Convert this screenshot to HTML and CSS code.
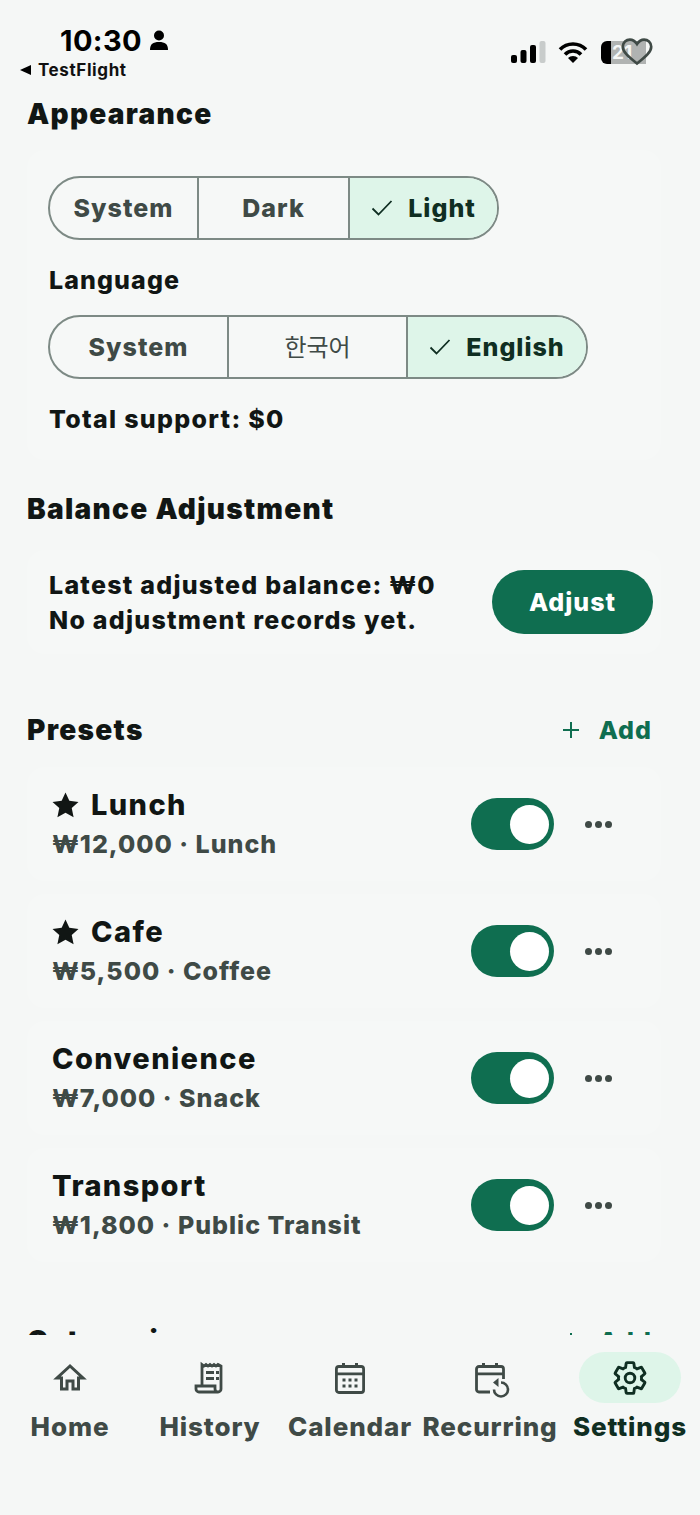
FILE: index.html
```html
<!DOCTYPE html>
<html lang="en">
<head>
    <meta charset="UTF-8">
    <meta name="viewport" content="width=device-width, initial-scale=1.0">
    <title>Settings</title>
    <link rel="stylesheet" href="styles.css">
</head>
<body>
    <div class="status">
        <div class="status-left">
            <div class="clock">10:30
                <svg class="person" viewBox="0 0 20 20"><circle cx="10" cy="5.500" r="5"/><path d="M1 20c0-6 3-8 9-8s9 2 9 8z"/></svg>
            </div>
            <div class="back"><span class="back-arrow"></span>TestFlight</div>
        </div>
        <div class="status-right">
            <svg class="signal" viewBox="0 0 35 22"><rect x="0" y="14" width="6" height="8" rx="2"/><rect x="9.500" y="9" width="6" height="13" rx="2"/><rect x="19" y="4" width="6" height="18" rx="2"/><rect x="28.500" y="0" width="6" height="22" rx="2" fill="#c8cccb"/></svg>
            <svg class="wifi" viewBox="0 0 30 22"><path d="M2 8.500a18 18 0 0 1 26 0M7 13.500a11 11 0 0 1 16 0" fill="none" stroke="#000" stroke-width="3.600"/><path d="M15 22l-5-5a7 7 0 0 1 10 0z"/></svg>
            <div class="battery">
                <div class="battery-fill"></div>
                <div class="battery-rest">21</div>
                <svg class="heart" viewBox="0 0 36 32"><path d="M18 29C8 21 2 16 2 10c0-5 4-8 8-8 3 0 6 2 8 5 2-3 5-5 8-5 4 0 8 3 8 8 0 6-6 11-16 19z" fill="none" stroke="#3f4a46" stroke-width="3"/></svg>
            </div>
        </div>
    </div>

    <main class="content">
        <h2 class="heading">Appearance</h2>
        <section class="card settings-card">
            <div class="segments seg-short">
                <div class="seg seg-a">System</div>
                <div class="seg seg-b">Dark</div>
                <div class="seg seg-c on"><svg class="check" viewBox="0 0 22 18"><path d="M1.500 9.500l6 6L20.500 2" fill="none" stroke="#0f2e22" stroke-width="1.800"/></svg>Light</div>
            </div>
            <div class="label">Language</div>
            <div class="segments seg-long">
                <div class="seg seg-d">System</div>
                <div class="seg seg-e korean">한국어</div>
                <div class="seg seg-f on"><svg class="check" viewBox="0 0 22 18"><path d="M1.500 9.500l6 6L20.500 2" fill="none" stroke="#0f2e22" stroke-width="1.800"/></svg>English</div>
            </div>
            <div class="label support">Total support: $0</div>
        </section>

        <h2 class="heading balance-heading">Balance Adjustment</h2>
        <section class="card balance-card">
            <div class="balance-text">
                <div>Latest adjusted balance: ₩0</div>
                <div>No adjustment records yet.</div>
            </div>
            <div class="adjust">Adjust</div>
        </section>

        <div class="heading-row presets-heading">
            <h2 class="heading">Presets</h2>
            <div class="add"><svg class="plus" viewBox="0 0 18 18"><path d="M9 1v16M1 9h16" fill="none" stroke="#0f6e50" stroke-width="2"/></svg>Add</div>
        </div>

        <div class="preset">
            <div class="preset-info">
                <div class="preset-name"><svg class="star" viewBox="0 0 26 25"><path d="M13 .5l3.700 8 8.800 1-6.500 6 1.800 8.800L13 20l-7.800 4.300L7 15.500l-6.500-6 8.800-1z"/></svg>Lunch</div>
                <div class="preset-sub">₩12,000 · Lunch</div>
            </div>
            <div class="toggle"><span class="knob"></span></div>
            <div class="more"><i></i><i></i><i></i></div>
        </div>
        <div class="preset">
            <div class="preset-info">
                <div class="preset-name"><svg class="star" viewBox="0 0 26 25"><path d="M13 .5l3.700 8 8.800 1-6.500 6 1.800 8.800L13 20l-7.800 4.300L7 15.500l-6.500-6 8.800-1z"/></svg>Cafe</div>
                <div class="preset-sub">₩5,500 · Coffee</div>
            </div>
            <div class="toggle"><span class="knob"></span></div>
            <div class="more"><i></i><i></i><i></i></div>
        </div>
        <div class="preset">
            <div class="preset-info">
                <div class="preset-name">Convenience</div>
                <div class="preset-sub">₩7,000 · Snack</div>
            </div>
            <div class="toggle"><span class="knob"></span></div>
            <div class="more"><i></i><i></i><i></i></div>
        </div>
        <div class="preset">
            <div class="preset-info">
                <div class="preset-name">Transport</div>
                <div class="preset-sub">₩1,800 · Public Transit</div>
            </div>
            <div class="toggle"><span class="knob"></span></div>
            <div class="more"><i></i><i></i><i></i></div>
        </div>

        <div class="heading-row categories-heading">
            <h2 class="heading">Categories</h2>
            <div class="add"><svg class="plus" viewBox="0 0 18 18"><path d="M9 1v16M1 9h16" fill="none" stroke="#0f6e50" stroke-width="2"/></svg>Add</div>
        </div>
    </main>

    <nav class="tabs">
        <div class="tab">
            <div class="tab-icon"><svg viewBox="0 0 32 32"><path d="M16 4L3 16h4.500v11H13v-8h6v8h5.500V16H29z" fill="none" stroke="#3f4a46" stroke-width="3"/></svg></div>
            <div class="tab-label">Home</div>
        </div>
        <div class="tab">
            <div class="tab-icon"><svg viewBox="0 0 32 32"><path d="M8 24V2.500l2 1.500 2-1.500 2 1.500 2-1.500 2 1.500 2-1.500 2 1.500 2-1.500 3 1.500V27a3 3 0 0 1-3 3H5a3 3 0 0 1-3-3v-3h19v3a3 3 0 0 0 3 3" fill="none" stroke="#3f4a46" stroke-width="2.800"/><path d="M12 9h8v3h-8zM22 9h3v3h-3zM12 15h8v3h-8zM22 15h3v3h-3z" fill="#3f4a46"/></svg></div>
            <div class="tab-label">History</div>
        </div>
        <div class="tab">
            <div class="tab-icon"><svg viewBox="0 0 32 32"><rect x="2.400" y="4.500" width="27.200" height="26" rx="2.500" fill="none" stroke="#3f4a46" stroke-width="2.800"/><path d="M2 10.500h28v2.800H2zM8 1h3v5H8zM21 1h3v5h-3z" fill="#3f4a46"/><path d="M8.500 16.500h3v3h-3zM14.500 16.500h3v3h-3zM20.500 16.500h3v3h-3zM8.500 22.500h3v3h-3zM14.500 22.500h3v3h-3zM20.500 22.500h3v3h-3z" fill="#3f4a46"/></svg></div>
            <div class="tab-label">Calendar</div>
        </div>
        <div class="tab">
            <div class="tab-icon"><svg viewBox="0 0 32 32"><path d="M16 30H5A2.500 2.500 0 0 1 2.500 27.500V7A2.500 2.500 0 0 1 5 4.500h22A2.500 2.500 0 0 1 29.500 7V17" fill="none" stroke="#3f4a46" stroke-width="2.800"/><path d="M2 10.500h28v2.800H2zM8 1h3v5H8zM21 1h3v5h-3z" fill="#3f4a46"/><path d="M27 20.500a7 7 0 1 1-7 7" fill="none" stroke="#3f4a46" stroke-width="2.600"/><path d="M24.500 16v9L19 20.500z" fill="#3f4a46"/></svg></div>
            <div class="tab-label">Recurring</div>
        </div>
        <div class="tab active">
            <div class="tab-icon"><svg viewBox="2 2 20 20"><path d="M19.140 12.940c.04-.3.06-.61.06-.94 0-.32-.02-.64-.07-.94l2.030-1.580c.18-.14.23-.41.12-.61l-1.920-3.320c-.12-.22-.37-.29-.59-.22l-2.390.96c-.5-.38-1.030-.7-1.620-.94l-.36-2.540c-.04-.24-.24-.41-.48-.41h-3.840c-.24 0-.43.17-.47.41l-.36 2.540c-.59.24-1.130.57-1.620.94l-2.390-.96c-.22-.08-.47 0-.59.22L2.740 8.870c-.12.21-.08.47.12.61l2.030 1.580c-.05.3-.09.63-.09.94s.02.64.07.94l-2.030 1.580c-.18.14-.23.41-.12.61l1.920 3.320c.12.22.37.29.59.22l2.390-.96c.5.38 1.030.7 1.620.94l.36 2.540c.05.24.24.41.48.41h3.840c.24 0 .44-.17.47-.41l.36-2.540c.59-.24 1.130-.56 1.620-.94l2.390.96c.22.08.47 0 .59-.22l1.920-3.320c.12-.22.07-.47-.12-.61l-2.010-1.580z" fill="none" stroke="#0f2e22" stroke-width="1.800"/><circle cx="12" cy="12" r="3" fill="none" stroke="#0f2e22" stroke-width="1.800"/></svg></div>
            <div class="tab-label">Settings</div>
        </div>
    </nav>
</body>
</html>
```

FILE: styles.css
```css
* {
    box-sizing: border-box;
}
html, body {
    margin: 0;
    height: 100%;
}
body {
    width: 700px;
    height: 1515px;
    display: flex;
    flex-direction: column;
    overflow: hidden;
    background-color: #f5f7f6;
    color: #111614;
    font-family: Inter, "Noto Sans CJK KR", sans-serif;
    font-weight: 800;
    letter-spacing: 1px;
}

/* status bar */
.status {
    height: 96px;
    flex: none;
    display: flex;
    justify-content: space-between;
    padding: 22px 54px 0 20px;
}
.clock {
    display: flex;
    align-items: center;
    gap: 7px;
    margin-left: 40px;
    height: 36px;
    font-size: 29px;
    font-weight: 700;
    letter-spacing: 0.4px;
    color: #000;
}
.person {
    width: 20px;
    height: 20px;
}
.back {
    display: flex;
    align-items: center;
    gap: 7px;
    height: 24px;
    font-size: 17px;
    font-weight: 700;
    letter-spacing: 0.6px;
    color: #111;
}
.back-arrow {
    width: 0;
    height: 0;
    border-style: solid;
    border-width: 5.500px 11px 5.500px 0;
    border-color: transparent #000 transparent transparent;
}
.status-right {
    display: flex;
    align-items: center;
    height: 60px;
    gap: 12px;
}
.signal {
    width: 35px;
    height: 22px;
}
.wifi {
    width: 30px;
    height: 22px;
}
.battery {
    position: relative;
    display: flex;
    width: 45px;
    height: 23px;
    margin-left: 1px;
}
.battery-fill {
    width: 10px;
    background: #000;
    border-radius: 6px 0 0 6px;
}
.battery-rest {
    flex: 1;
    background: #b0b3b2;
    color: #f5f7f6;
    font-size: 19px;
    font-weight: 700;
    letter-spacing: 0;
    line-height: 23px;
    padding-left: 1px;
}
.heart {
    position: absolute;
    left: 20px;
    top: -4px;
    width: 32px;
    height: 30px;
}

/* scrolling part */
.content {
    flex: 1;
    overflow: hidden;
    padding: 0 48px 0 27px;
}
.heading {
    margin: 0;
    font-size: 28px;
    line-height: 36px;
    letter-spacing: 1.300px;
    font-weight: 900;
}
.card {
    margin-right: -9px;
    border-radius: 18px;
    background-color: #f6f8f7;
}
.settings-card {
    margin-top: 18px;
    height: 310px;
    padding: 26px 0 0 21px;
}
.segments {
    display: flex;
    height: 64px;
    border: 2px solid #7d8a85;
    border-radius: 32px;
    overflow: hidden;
    font-size: 25px;
    color: #3f4a46;
}
.seg-short {
    width: 451px;
}
.seg-long {
    width: 540px;
}
.seg {
    display: flex;
    align-items: center;
    justify-content: center;
    border-right: 2px solid #7d8a85;
}
.seg-a { width: 149px; }
.seg-b { width: 151px; }
.seg-c { flex: 1; }
.seg-d { width: 179px; }
.seg-e { width: 179px; }
.seg-f { flex: 1; }
.on {
    border-right: 0;
    background-color: #def5e9;
    color: #0f2e22;
    gap: 15px;
}
.korean {
    padding-bottom: 3px;
    font-weight: 400;
    font-size: 24px;
    letter-spacing: 0;
}
.check {
    width: 22px;
    height: 18px;
}
.label {
    margin-left: 1px;
    font-size: 25px;
    line-height: 34px;
    letter-spacing: 1.100px;
    margin-top: 23px;
    margin-bottom: 18px;
}
.support {
    margin-top: 23px;
    margin-bottom: 0;
    letter-spacing: 1.300px;
}
.balance-heading {
    margin-top: 31px;
}
.balance-card {
    margin-top: 23px;
    height: 104px;
    display: flex;
    align-items: center;
    justify-content: space-between;
    padding: 2px 21px 0 22px;
}
.balance-text {
    font-size: 25px;
    line-height: 35px;
    letter-spacing: 1.250px;
}
.adjust {
    width: 161px;
    height: 64px;
    margin-top: -3px;
    margin-right: -13px;
    display: flex;
    align-items: center;
    justify-content: center;
    border-radius: 32px;
    background-color: #0f6e50;
    color: #fff;
    font-size: 25px;
}
.heading-row {
    display: flex;
    align-items: center;
    justify-content: space-between;
}
.presets-heading {
    margin-top: 58px;
    margin-bottom: 19px;
}
.add {
    display: flex;
    align-items: center;
    gap: 19px;
    font-size: 25px;
    color: #0f6e50;
}
.plus {
    width: 18px;
    height: 18px;
}

/* preset rows */
.preset {
    display: flex;
    align-items: center;
    height: 114px;
    margin-bottom: 13px;
    margin-right: -9px;
    padding: 0 0 0 25px;
    border-radius: 18px;
    background-color: #f6f8f7;
}
.preset-info {
    flex: 1;
}
.preset-name {
    display: flex;
    align-items: center;
    gap: 12px;
    font-size: 29px;
    line-height: 40px;
    letter-spacing: 1.400px;
}
.star {
    width: 27px;
    height: 26px;
    fill: #111614;
}
.preset-sub {
    font-size: 25px;
    line-height: 38px;
    color: #3f4a46;
}
.toggle {
    width: 83px;
    height: 52px;
    display: flex;
    align-items: center;
    justify-content: flex-end;
    padding-right: 5px;
    border-radius: 26px;
    background-color: #0f6e50;
}
.knob {
    width: 39px;
    height: 39px;
    border-radius: 50%;
    background-color: #fff;
}
.more {
    display: flex;
    gap: 3px;
    margin: 0 49px 0 31px;
}
.more i {
    width: 7px;
    height: 7px;
    border-radius: 50%;
    background-color: #3f4a46;
}
.categories-heading {
    margin-top: 61px;
}

/* bottom tabs */
.tabs {
    flex: none;
    height: 180px;
    display: grid;
    grid-template-columns: repeat(5, 140px);
    padding-top: 17px;
    background-color: #f5f7f6;
}
.tab {
    display: flex;
    flex-direction: column;
    align-items: center;
}
.tab-icon {
    width: 102px;
    height: 51px;
    display: flex;
    align-items: center;
    justify-content: center;
    border-radius: 26px;
}
.tab-icon svg {
    width: 32px;
    height: 32px;
    overflow: visible;
}
.tab-label {
    margin-top: 6px;
    font-size: 26px;
    line-height: 36px;
    white-space: nowrap;
    letter-spacing: 0.9px;
    color: #3f4a46;
}
.active .tab-icon {
    background-color: #def5e9;
}
.active .tab-label {
    color: #0f2e22;
}
```
